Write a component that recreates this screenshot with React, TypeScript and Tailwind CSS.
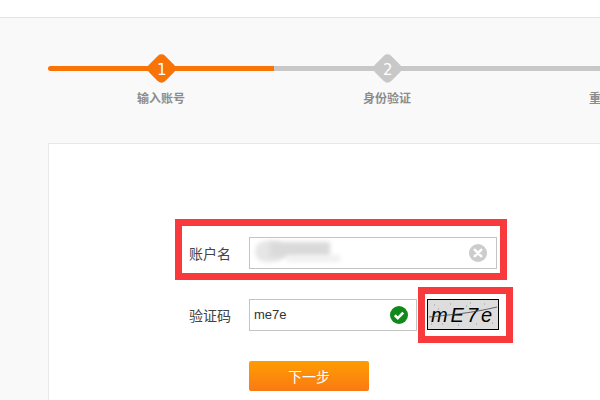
import React from 'react';

const cjk = "font-['Noto_Sans_CJK_SC','Liberation_Sans',sans-serif]";

function Step({ n, label, active, first }: { n: number; label: string; active?: boolean; first?: boolean }) {
  return (
    <div className="relative flex w-[226px] flex-col items-center">
      <div className={`h-[5px] w-full ${active ? 'bg-[#f97306]' : 'bg-[#c8c8c8]'} ${first ? 'rounded-l-full' : ''}`} />
      <div className={`absolute top-[-9px] flex h-[23px] w-[23px] rotate-45 items-center justify-center rounded-[5px] ${active ? 'bg-[#f97306]' : 'bg-[#c8c8c8]'}`}>
        <span className="translate-x-[1px] translate-y-[1px] -rotate-45 font-['DejaVu_Sans',sans-serif] text-[15px] leading-none text-white">{n}</span>
      </div>
      <span className={`mt-[18px] text-[12px] leading-[18px] font-bold text-[#8c8c8c] ${cjk}`}>{label}</span>
    </div>
  );
}

export default function App() {
  return (
    <div className="h-[400px] w-[600px] overflow-hidden bg-[#f9f9f9]">
      <div className="h-[18px] border-b border-[#e3e3e3] bg-white" />

      <div className="ml-[48px] w-[678px]">
        <div className="flex pt-[48px]">
          <Step n={1} label="输入账号" active first />
          <Step n={2} label="身份验证" />
          <Step n={3} label="重置密码" />
        </div>

        <div className="mt-[36px] h-[300px] border border-[#e8e8e8] bg-white pt-[93px]">
          <div className="relative flex items-center">
            <label className={`w-[182px] text-right text-[14px] text-[#444] ${cjk}`}>账户名</label>
            <div className="relative ml-[18px] flex h-[32px] w-[248px] items-center justify-end border border-[#c4c4c4] pr-[9px]">
              <div className="absolute top-[3px] left-[5px] h-[21px] w-[30px] rounded-full bg-[#e6e6e6] blur-[2px]" />
              <div className="absolute top-[4px] left-[20px] h-[15px] w-[60px] bg-[#dadada] blur-[2px]" />
              <div className="absolute top-[17px] left-[37px] h-[7px] w-[53px] bg-[#f0f0f0] blur-[2px]" />
              <svg width="18" height="18" viewBox="0 0 18 18">
                <circle cx="9" cy="9" r="9" fill="#cccccc" />
                <path d="M5.8 5.8l6.4 6.4M12.2 5.8l-6.4 6.4" stroke="#fff" strokeWidth="2.6" strokeLinecap="round" />
              </svg>
            </div>
            <div className="absolute top-[-18px] left-[126px] h-[61px] w-[332px] border-[7px] border-[#f93a3c]" />
          </div>

          <div className="mt-[30px] flex items-start">
            <label className={`w-[182px] self-center text-right text-[14px] text-[#444] ${cjk}`}>验证码</label>
            <div className="ml-[18px] flex h-[32px] w-[168px] items-center justify-between border border-[#c4c4c4] pr-[8px] pl-[4px]">
              <span className="font-['Liberation_Sans',sans-serif] text-[13px] text-[#333]">me7e</span>
              <svg width="18" height="18" viewBox="0 0 18 18">
                <circle cx="9" cy="9" r="9" fill="#0f8a1a" />
                <path d="M4.8 9.2l3 2.9 5.4-5.4" fill="none" stroke="#fff" strokeWidth="2.6" />
              </svg>
            </div>
            <div className="relative ml-[10px]">
              <div className="relative flex h-[31px] w-[72px] items-center justify-center overflow-hidden border border-black bg-[#dddddd]">
                <span className="font-['Liberation_Sans',sans-serif] text-[20px] leading-none tracking-[3px] text-black italic">mE7e</span>
                <svg className="absolute inset-0" width="70" height="29" viewBox="0 0 70 29">
                  <path d="M1 17C18 15 40 14 69 7" fill="none" stroke="#444" strokeWidth="0.8" />
                  <path d="M6 5h1M14 24h1M22 4h1M30 25h1M38 6h1M48 24h1M56 4h1M64 23h1M10 9h1M60 13h1M3 24h1M42 3h1" stroke="#999" strokeWidth="1" />
                </svg>
              </div>
              <div className="absolute top-[-12px] left-[-9px] h-[56px] w-[95px] border-[7px] border-[#f93a3c]" />
            </div>
          </div>

          <button className={`mt-[30px] ml-[200px] block h-[30px] w-[120px] rounded-[2px] bg-gradient-to-b from-[#ff9c00] to-[#f97a12] text-[14px] text-white ${cjk}`}>
            下一步
          </button>
        </div>
      </div>
    </div>
  );
}
